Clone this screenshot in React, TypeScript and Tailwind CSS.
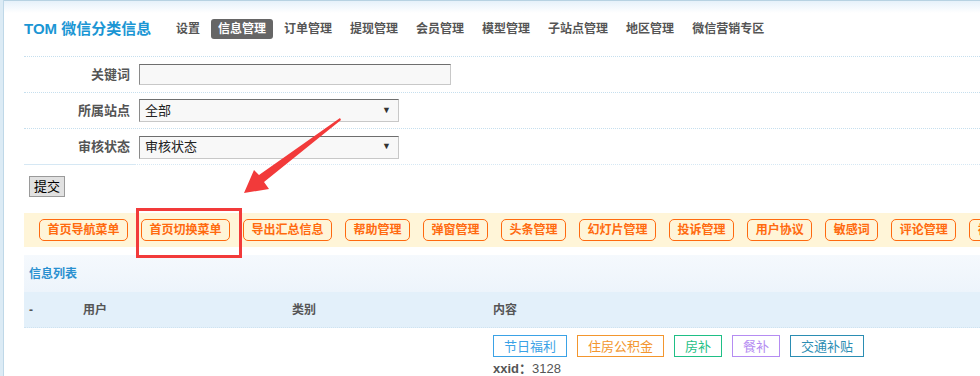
import React from "react";

const navItems = [
  "设置",
  "信息管理",
  "订单管理",
  "提现管理",
  "会员管理",
  "模型管理",
  "子站点管理",
  "地区管理",
  "微信营销专区",
];

const toolButtons = [
  "首页导航菜单",
  "首页切换菜单",
  "导出汇总信息",
  "帮助管理",
  "弹窗管理",
  "头条管理",
  "幻灯片管理",
  "投诉管理",
  "用户协议",
  "敏感词",
  "评论管理",
  "视频管理",
];

const tags = [
  { text: "节日福利", cls: "border-[#3ba2e6] text-[#3ba2e6]" },
  { text: "住房公积金", cls: "border-[#f3962e] text-[#f3962e]" },
  { text: "房补", cls: "border-[#1fbf86] text-[#1fbf86]" },
  { text: "餐补", cls: "border-[#b58cf2] text-[#b58cf2]" },
  { text: "交通补贴", cls: "border-[#2b8db3] text-[#2b8db3]" },
];

function SelectBox({ value }: { value: string }) {
  return (
    <div className="flex items-center justify-between w-[260px] h-[23px] bg-[#f8f8f8] border border-[#c8c8c8] border-t-[#6e6e6e] border-l-[#8a8a8a] pl-[5px] pr-[7px] text-[13px] text-[#222]">
      <span>{value}</span>
      <span className="text-[9px] text-[#333]">▼</span>
    </div>
  );
}

export default function App() {
  return (
    <div className="relative w-[980px] h-[376px] overflow-hidden bg-white flex font-['Liberation_Sans','Noto_Sans_CJK_SC',sans-serif]">
      {/* left strip */}
      <div className="w-[4px] shrink-0 bg-[#dcebf5] border-r border-[#bfd8e8]" />

      <div className="flex-1 border-t border-[#b7d2e2] bg-[linear-gradient(to_bottom,#e6f1fa,#ffffff_12px)] pl-[20px]">
        {/* header */}
        <div className="h-[56px] flex items-center border-b border-dotted border-[#c6dfee]">
          <div className="text-[15px] font-bold text-[#1b96d4] w-[152px] leading-none whitespace-nowrap">
            TOM 微信分类信息
          </div>
          <div className="flex items-center gap-[4px] -ml-[7px]">
            {navItems.map((item) => (
              <div
                key={item}
                className={`px-[7px] h-[20px] flex items-center rounded-[3px] text-[12px] font-bold leading-none ${
                  item === "信息管理"
                    ? "bg-[#666666] text-white"
                    : "text-[#555555]"
                }`}
              >
                {item}
              </div>
            ))}
          </div>
        </div>

        {/* search form */}
        <div className="flex flex-col">
          <div className="h-[36px] flex items-center border-b border-dotted border-[#c6dfee]">
            <div className="w-[115px] pr-[9px] text-right text-[13px] font-bold text-[#555]">
              关键词
            </div>
            <div className="w-[312px] h-[21px] bg-[#f8f8f8] border border-[#c8c8c8] border-t-[#6e6e6e] border-l-[#8a8a8a]" />
          </div>
          <div className="h-[36px] flex items-center border-b border-dotted border-[#c6dfee]">
            <div className="w-[115px] pr-[9px] text-right text-[13px] font-bold text-[#555]">
              所属站点
            </div>
            <SelectBox value="全部" />
          </div>
          <div className="h-[36px] flex items-center relative">
            <div className="w-[115px] pr-[9px] text-right text-[13px] font-bold text-[#555]">
              审核状态
            </div>
            <SelectBox value="审核状态" />
            <div className="absolute left-0 bottom-0 w-[111px] border-b border-[#d6e8f4]" />
            <div className="absolute left-[111px] right-0 bottom-0 border-b border-dotted border-[#d6e8f4]" />
          </div>
        </div>

        <div className="pl-[5px] pt-[9px]">
          <button className="h-[21px] px-[4px] bg-[#e1e1e1] border border-[#9a9a9a] text-[13px] text-black leading-none">
            提交
          </button>
        </div>

        {/* tool bar */}
        <div className="mt-[15px] h-[34px] bg-[#fff5d8] flex items-center gap-[13px] pl-[15px] overflow-hidden whitespace-nowrap">
          {toolButtons.map((b) => (
            <div
              key={b}
              className="shrink-0 h-[22px] px-[7.5px] flex items-center border border-[#ff6a0f] rounded-[5px] text-[12px] font-bold text-[#ff6a0f] leading-none"
            >
              {b}
            </div>
          ))}
        </div>

        {/* list */}
        <div className="mt-[8px] h-[37px] flex items-center pl-[5px] bg-[linear-gradient(to_bottom,#f5f9fd,#edf4fb)] text-[12px] font-bold text-[#2a90d0]">
          信息列表
        </div>
        <div className="h-[36px] flex items-center bg-[#e3f0fa] border-b border-dotted border-[#cfe3f1] text-[12px] font-bold text-[#555]">
          <div className="w-[59px] pl-[5px]">-</div>
          <div className="w-[209px]">用户</div>
          <div className="w-[201px]">类别</div>
          <div>内容</div>
        </div>
        <div className="flex pt-[7px]">
          <div className="w-[469px]" />
          <div className="flex flex-col">
            <div className="flex gap-[10px]">
              {tags.map((t) => (
                <div
                  key={t.text}
                  className={`h-[22px] px-[10px] flex items-center border text-[13px] leading-none ${t.cls}`}
                >
                  {t.text}
                </div>
              ))}
            </div>
            <div className="mt-[4px] text-[13px] text-[#555] leading-[16px]">
              <span className="font-bold">xxid：</span>3128
            </div>
          </div>
        </div>
      </div>

      {/* red highlight box */}
      <div className="absolute left-[136px] top-[208px] w-[106px] h-[50px] border-[3px] border-[#f23a3a]" />

      {/* red arrow */}
      <svg
        className="absolute left-0 top-0 pointer-events-none"
        width="980"
        height="376"
        viewBox="0 0 980 376"
      >
        <polygon
          points="340,118 341,120 264,182 269,189 244,193 254,170 259,175"
          fill="#f23a3a"
        />
      </svg>
    </div>
  );
}
